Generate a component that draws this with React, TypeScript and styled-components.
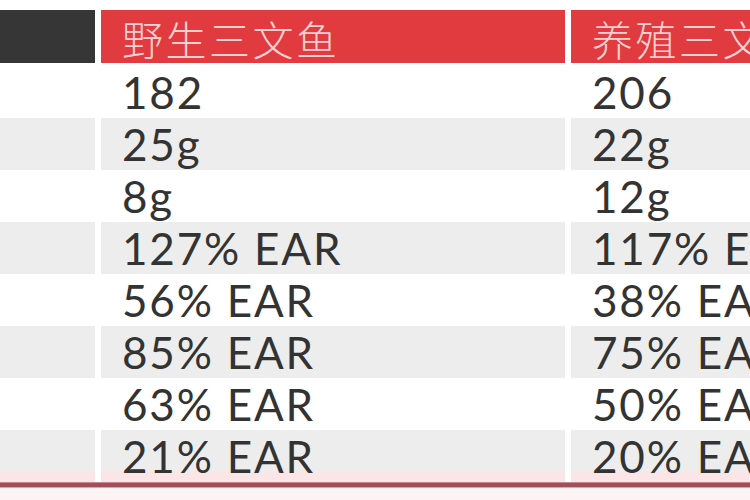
import * as React from 'react';
import styled, { createGlobalStyle } from 'styled-components';

const GlobalStyle = createGlobalStyle`
  html, body {
    margin: 0;
    padding: 0;
    background: #ffffff;
  }
  body {
    font-family: Lato, "Noto Sans", "Noto Sans CJK SC", sans-serif;
  }
`;

const Page = styled.div`
  width: 750px;
  height: 500px;
  overflow: hidden;
  background: #fdf3f4;
  display: flex;
  flex-direction: column;
`;

const Sheet = styled.div`
  background: #ffffff;
  padding-top: 10px;
  display: flex;
  flex-direction: column;
`;

const Row = styled.div<{ $head?: boolean }>`
  display: grid;
  grid-template-columns: 95px 464px 463px;
  column-gap: 6px;
  height: ${(p) => (p.$head ? '53px' : '52px')};
  margin-bottom: ${(p) => (p.$head ? '3px' : '0')};
`;

const HeadCell = styled.div<{ $dark?: boolean }>`
  display: flex;
  align-items: center;
  background: ${(p) => (p.$dark ? '#363636' : '#e13a3f')};
  color: #fbd0d0;
  font-family: "Noto Sans CJK SC", sans-serif;
  font-weight: 300;
  font-size: 41px;
  letter-spacing: 2.5px;
  line-height: 1;
  padding: 4px 0 0 21px;
  box-sizing: border-box;
  white-space: nowrap;
`;

const Cell = styled.div<{ $shade?: boolean; $last?: boolean }>`
  background: ${(p) =>
    p.$last
      ? 'linear-gradient(to bottom, #ededed 0, #ededed 42px, #fbe5e7 42px, #fbe5e7 100%)'
      : p.$shade
        ? '#ededed'
        : '#ffffff'};
  color: #333333;
  font-family: Lato, "Noto Sans", sans-serif;
  font-size: 44px;
  letter-spacing: 1.8px;
  line-height: 52px;
  padding-left: 21px;
  white-space: nowrap;
`;

const Rule = styled.div`
  height: 6px;
  background: #a24f5a;
  border-top: 1px solid #c98891;
  border-bottom: 1px solid #d8a8ae;
  box-sizing: border-box;
`;

const rows: [string, string][] = [
  ['182', '206'],
  ['25g', '22g'],
  ['8g', '12g'],
  ['127% EAR', '117% EAR'],
  ['56% EAR', '38% EAR'],
  ['85% EAR', '75% EAR'],
  ['63% EAR', '50% EAR'],
  ['21% EAR', '20% EAR'],
];

export default function App() {
  return (
    <Page>
      <GlobalStyle />
      <Sheet>
        <Row $head>
          <HeadCell $dark />
          <HeadCell>野生三文鱼</HeadCell>
          <HeadCell>养殖三文鱼</HeadCell>
        </Row>
        {rows.map(([wild, farmed], i) => {
          const shade = i % 2 === 1;
          const last = i === rows.length - 1;
          return (
            <Row key={i}>
              <Cell $shade={shade} $last={last} />
              <Cell $shade={shade} $last={last}>{wild}</Cell>
              <Cell $shade={shade} $last={last}>{farmed}</Cell>
            </Row>
          );
        })}
      </Sheet>
      <Rule />
    </Page>
  );
}
